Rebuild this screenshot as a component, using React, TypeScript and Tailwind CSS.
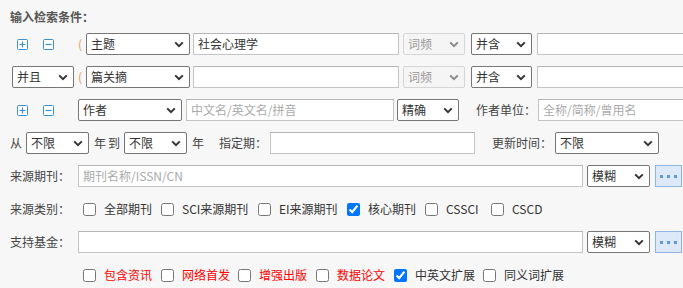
import React from 'react';

const Chevron = ({ disabled }: { disabled?: boolean }) => (
  <svg width="10" height="7" viewBox="0 0 10 7" className="shrink-0">
    <path d="M1.2 1.4 L5 5.2 L8.8 1.4" fill="none" stroke={disabled ? '#8a8a8a' : '#333'} strokeWidth="2" />
  </svg>
);

interface SelProps {
  text: string;
  className: string;
  disabled?: boolean;
}

const Sel: React.FC<SelProps> = ({ text, className, disabled }) => (
  <div
    className={`${className} h-[22px] shrink-0 flex items-center justify-between pl-[4px] pr-[5px] border rounded-[2px] ${
      disabled ? 'border-[#d6d6d6] bg-[#f5f5f5] text-[#9a9a9a]' : 'border-[#767676] bg-white text-[#333]'
    }`}
  >
    <span>{text}</span>
    <Chevron disabled={disabled} />
  </div>
);

interface InpProps {
  className: string;
  value?: string;
  placeholder?: string;
}

const Inp: React.FC<InpProps> = ({ className, value, placeholder }) => (
  <div className={`${className} h-[22px] shrink-0 flex items-center pl-[4px] border border-[#c4c4c4] border-t-[#b5b5b5] bg-white`}>
    {value ? <span className="text-[#333]">{value}</span> : <span className="text-[#aaa]">{placeholder}</span>}
  </div>
);

const PlusMinus = () => (
  <div className="w-[68px] shrink-0 flex items-center">
    <svg width="11" height="11" viewBox="0 0 11 11" className="ml-[7px]">
      <rect x="0.5" y="0.5" width="10" height="10" rx="1" fill="white" stroke="#3a8fd2" />
      <path d="M2.5 5.5 H8.5 M5.5 2.5 V8.5" stroke="#3a8fd2" strokeWidth="1.2" />
    </svg>
    <svg width="11" height="11" viewBox="0 0 11 11" className="ml-[15px]">
      <rect x="0.5" y="0.5" width="10" height="10" rx="1" fill="white" stroke="#3a8fd2" />
      <path d="M2.5 5.5 H8.5" stroke="#3a8fd2" strokeWidth="1.2" />
    </svg>
  </div>
);

const Paren = () => <span className="w-[8px] shrink-0 text-[#d9a15c]">(</span>;

const MoreBtn = () => (
  <div className="ml-[5px] w-[27px] h-[22px] shrink-0 flex items-center justify-center gap-[4px] bg-[#dde9f8] border border-[#8fb3e2]">
    <span className="w-[3px] h-[3px] bg-[#5d9ad6]" />
    <span className="w-[3px] h-[3px] bg-[#5d9ad6]" />
    <span className="w-[3px] h-[3px] bg-[#5d9ad6]" />
  </div>
);

interface CbProps {
  label: string;
  className: string;
  checked?: boolean;
  red?: boolean;
}

const Cb: React.FC<CbProps> = ({ label, className, checked, red }) => (
  <label className={`${className} shrink-0 flex items-center`}>
    <input type="checkbox" defaultChecked={checked} className="m-0 w-[13px] h-[13px]" />
    <span className={`ml-[8px] ${red ? 'text-[#ff0000]' : 'text-[#333]'}`}>{label}</span>
  </label>
);

export default function App() {
  return (
    <div className="w-[683px] h-[288px] overflow-hidden bg-[#f7f7f7] font-['Noto_Sans_CJK_SC','Noto_Sans',sans-serif] text-[12px] leading-[22px] text-[#444]">
      <div className="h-[34px] flex items-center pl-[10px] font-bold text-[#555]">输入检索条件：</div>

      <div className="flex flex-col gap-[11px]">
        {/* 主题 */}
        <div className="h-[22px] flex items-center pl-[10px] -mt-[1px]">
          <PlusMinus />
          <Paren />
          <Sel text="主题" className="w-[104px]" />
          <Inp className="ml-[3px] w-[206px]" value="社会心理学" />
          <Sel text="词频" className="ml-[4px] w-[62px]" disabled />
          <Sel text="并含" className="ml-[6px] w-[61px]" />
          <Inp className="ml-[5px] w-[206px]" />
        </div>

        {/* 篇关摘 */}
        <div className="h-[22px] flex items-center pl-[10px]">
          <Sel text="并且" className="ml-[2px] w-[62px]" />
          <span className="w-[4px] shrink-0" />
          <Paren />
          <Sel text="篇关摘" className="w-[104px]" />
          <Inp className="ml-[3px] w-[206px]" />
          <Sel text="词频" className="ml-[4px] w-[62px]" disabled />
          <Sel text="并含" className="ml-[6px] w-[61px]" />
          <Inp className="ml-[5px] w-[206px]" />
        </div>

        {/* 作者 */}
        <div className="h-[22px] flex items-center pl-[10px]">
          <PlusMinus />
          <Sel text="作者" className="w-[104px]" />
          <Inp className="ml-[4px] w-[208px]" placeholder="中文名/英文名/拼音" />
          <Sel text="精确" className="ml-[3px] w-[62px]" />
          <span className="ml-[17px] w-[62px] shrink-0">作者单位：</span>
          <Inp className="w-[160px]" placeholder="全称/简称/曾用名" />
        </div>

        {/* 时间 */}
        <div className="h-[22px] flex items-center pl-[10px]">
          <span className="w-[16px] shrink-0">从</span>
          <Sel text="不限" className="w-[63px]" />
          <span className="ml-[5px] shrink-0">年</span>
          <span className="ml-[2px] shrink-0">到</span>
          <Sel text="不限" className="ml-[4px] w-[63px]" />
          <span className="ml-[5px] shrink-0">年</span>
          <span className="ml-[15px] w-[48px] shrink-0">指定期：</span>
          <Inp className="ml-[3px] w-[205px]" />
          <span className="ml-[17px] w-[60px] shrink-0">更新时间：</span>
          <Sel text="不限" className="ml-[3px] w-[104px]" />
        </div>

        {/* 来源期刊 */}
        <div className="h-[22px] flex items-center pl-[10px]">
          <span className="w-[68px] shrink-0">来源期刊：</span>
          <Inp className="w-[505px]" placeholder="期刊名称/ISSN/CN" />
          <Sel text="模糊" className="ml-[4px] w-[63px]" />
          <MoreBtn />
        </div>

        {/* 来源类别 */}
        <div className="h-[22px] flex items-center pl-[10px]">
          <span className="w-[73px] shrink-0">来源类别：</span>
          <Cb label="全部期刊" className="w-[78px]" />
          <Cb label="SCI来源期刊" className="w-[97px]" />
          <Cb label="EI来源期刊" className="w-[89px]" />
          <Cb label="核心期刊" className="w-[78px]" checked />
          <Cb label="CSSCI" className="w-[66px]" />
          <Cb label="CSCD" className="w-[80px]" />
        </div>

        {/* 支持基金 */}
        <div className="h-[22px] flex items-center pl-[10px]">
          <span className="w-[68px] shrink-0">支持基金：</span>
          <Inp className="w-[505px]" />
          <Sel text="模糊" className="ml-[4px] w-[63px]" />
          <MoreBtn />
        </div>

        {/* 扩展 */}
        <div className="h-[22px] flex items-center pl-[83px]">
          <Cb label="包含资讯" className="w-[78px]" red />
          <Cb label="网络首发" className="w-[77px]" red />
          <Cb label="增强出版" className="w-[78px]" red />
          <Cb label="数据论文" className="w-[78px]" red />
          <Cb label="中英文扩展" className="w-[89px]" checked />
          <Cb label="同义词扩展" className="w-[90px]" />
        </div>
      </div>
    </div>
  );
}
